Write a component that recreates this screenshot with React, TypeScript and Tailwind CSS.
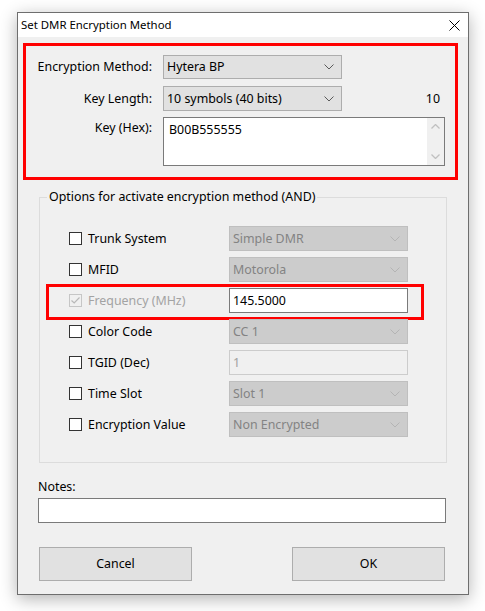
import React from "react";

const font = { fontFamily: '"Noto Sans", "Open Sans", Arial, sans-serif' };

function Chevron({ disabled = false }: { disabled?: boolean }) {
  return (
    <svg width="10" height="6" viewBox="0 0 10 6" className="shrink-0">
      <path
        d="M0.5 0.5 L5 5 L9.5 0.5"
        fill="none"
        stroke={disabled ? "#b4b4b4" : "#5a5a5a"}
        strokeWidth="1"
      />
    </svg>
  );
}

function Combo({ value, disabled = false, h = "h-[24px]" }: { value: string; disabled?: boolean; h?: string }) {
  return (
    <div
      className={`${h} w-[179px] flex items-center justify-between pl-[3px] pr-[7px] border ${
        disabled ? "bg-[#cccccc] border-[#bfbfbf] text-[#838383]" : "bg-[#e1e1e1] border-[#adadad] text-black"
      }`}
    >
      <span>{value}</span>
      <Chevron disabled={disabled} />
    </div>
  );
}

function Check({ disabledChecked = false }: { disabledChecked?: boolean }) {
  if (disabledChecked) {
    return (
      <div className="w-[13px] h-[13px] border border-[#c6c6c6] bg-[#f0f0f0] flex items-center justify-center shrink-0">
        <svg width="9" height="7" viewBox="0 0 9 7">
          <path d="M0.5 3.5 L3.2 6 L8.5 0.5" fill="none" stroke="#b8b8b8" strokeWidth="1.2" />
        </svg>
      </div>
    );
  }
  return <div className="w-[13px] h-[13px] border border-[#333333] bg-white shrink-0" />;
}

function OptionRow({
  label,
  children,
  disabledChecked = false,
}: {
  label: string;
  children: React.ReactNode;
  disabledChecked?: boolean;
}) {
  return (
    <div className="relative flex items-center h-[25px]">
      <div className="w-[160px] flex items-center gap-[6px]">
        <Check disabledChecked={disabledChecked} />
        <span className={disabledChecked ? "text-[#a3a3a3]" : "text-black"}>{label}</span>
      </div>
      {children}
    </div>
  );
}

export default function App() {
  return (
    <div className="min-h-screen bg-white pt-[12px] pl-[17px] text-[12.4px] leading-[16px] text-black" style={font}>
      <div className="w-[452px] h-[583px] border border-[#6e6e6e] bg-[#f0f0f0] shadow-[0_4px_16px_rgba(0,0,0,0.3)] flex flex-col">
        {/* Title bar */}
        <div className="h-[24px] bg-white flex items-center justify-between pl-[3px] pr-[8px]">
          <span className="text-[11.4px]">Set DMR Encryption Method</span>
          <svg width="11" height="11" viewBox="0 0 11 11">
            <path d="M0.5 0.5 L10.5 10.5 M10.5 0.5 L0.5 10.5" stroke="#000" strokeWidth="1" />
          </svg>
        </div>

        {/* Top section (highlighted) */}
        <div className="mt-[6px] ml-[5px] mr-[10px] h-[137px] border-[3px] border-[#ff0000] pt-[9px] flex flex-col">
          <div className="flex items-center">
            <span className="w-[126px] text-right">Encryption Method:</span>
            <div className="ml-[11px]">
              <Combo value="Hytera BP" />
            </div>
          </div>
          <div className="flex items-center mt-[7px]">
            <span className="w-[126px] text-right">Key Length:</span>
            <div className="ml-[11px] w-[282px] flex items-center justify-between">
              <Combo value="10 symbols (40 bits)" h="h-[25px]" />
              <span className="pr-[5px]">10</span>
            </div>
          </div>
          <div className="flex items-start mt-[6px]">
            <span className="w-[126px] text-right pt-[3px]">Key (Hex):</span>
            <div className="ml-[11px] w-[282px] h-[49px] border border-[#7a7a7a] bg-white flex">
              <span className="flex-1 pl-[5px] pt-[4px]">B00B555555</span>
              <div className="w-[17px] bg-[#f0f0f0] flex flex-col items-center justify-between py-[6px]">
                <svg width="9" height="5" viewBox="0 0 9 5">
                  <path d="M0.5 4.5 L4.5 0.5 L8.5 4.5" fill="none" stroke="#c0c0c0" strokeWidth="1.3" />
                </svg>
                <svg width="9" height="5" viewBox="0 0 9 5">
                  <path d="M0.5 0.5 L4.5 4.5 L8.5 0.5" fill="none" stroke="#c0c0c0" strokeWidth="1.3" />
                </svg>
              </div>
            </div>
          </div>
        </div>

        {/* Options group */}
        <div className="relative mt-[17px] mx-[21px] border border-[#dcdcdc] pt-[28px] pb-[25px] pl-[29px] flex flex-col gap-[6px]">
          <span className="absolute left-[7px] top-[-9px] px-[2px] bg-[#f0f0f0]">
            Options for activate encryption method (AND)
          </span>
          <OptionRow label="Trunk System">
            <Combo value="Simple DMR" disabled h="h-[25px]" />
          </OptionRow>
          <OptionRow label="MFID">
            <Combo value="Motorola" disabled h="h-[25px]" />
          </OptionRow>
          <OptionRow label="Frequency (MHz)" disabledChecked>
            <div className="w-[179px] h-[25px] border border-[#7a7a7a] bg-white flex items-center pl-[3px]">
              145.5000
            </div>
            <div className="pointer-events-none absolute left-[-23px] top-[-4px] w-[378px] h-[36px] border-[3px] border-[#ff0000]" />
          </OptionRow>
          <OptionRow label="Color Code">
            <Combo value="CC 1" disabled h="h-[25px]" />
          </OptionRow>
          <OptionRow label="TGID (Dec)">
            <div className="w-[179px] h-[25px] border border-[#cccccc] bg-[#f0f0f0] flex items-center pl-[3px] text-[#a0a0a0]">
              1
            </div>
          </OptionRow>
          <OptionRow label="Time Slot">
            <Combo value="Slot 1" disabled h="h-[25px]" />
          </OptionRow>
          <OptionRow label="Encryption Value">
            <Combo value="Non Encrypted" disabled h="h-[25px]" />
          </OptionRow>
        </div>

        {/* Notes */}
        <div className="mt-[16px] ml-[20px]">Notes:</div>
        <div className="mt-[3px] ml-[20px] w-[408px] h-[25px] border border-[#7a7a7a] bg-white" />

        {/* Buttons */}
        <div className="mt-[24px] ml-[21px] mr-[23px] flex justify-between">
          <button className="w-[153px] h-[34px] bg-[#e1e1e1] border border-[#adadad]">Cancel</button>
          <button className="w-[153px] h-[34px] bg-[#e1e1e1] border border-[#adadad]">OK</button>
        </div>
      </div>
    </div>
  );
}
